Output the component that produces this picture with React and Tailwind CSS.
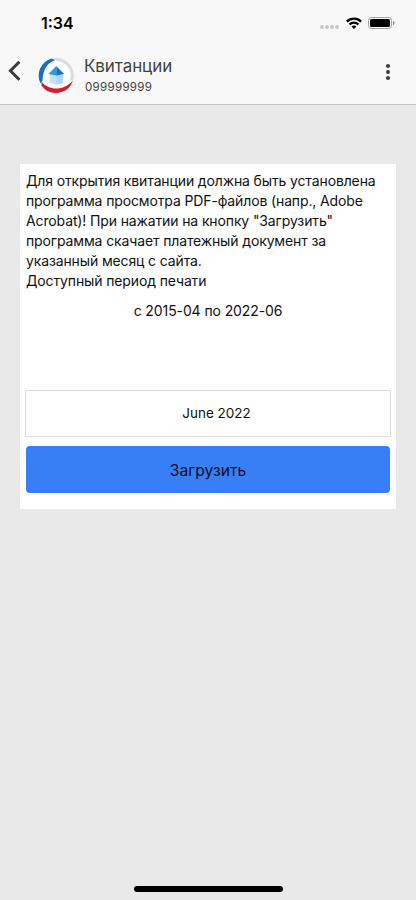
const description = [
  'Для открытия квитанции должна быть установлена',
  'программа просмотра PDF-файлов (напр., Adobe',
  'Acrobat)! При нажатии на кнопку "Загрузить"',
  'программа скачает платежный документ за',
  'указанный месяц с сайта.',
  'Доступный период печати',
];

const StatusBar = () => (
  <div className="flex h-[46px] items-center justify-between pl-[41px] pr-[21px]">
    <span className="text-[16px] font-semibold leading-5 text-black">1:34</span>
    <div className="flex items-center">
      <svg width="19" height="4" viewBox="0 0 19 4" className="mr-[7px] mt-2" fill="#c4c4c6">
        <circle cx="2" cy="2" r="1.9" />
        <circle cx="7" cy="2" r="1.9" />
        <circle cx="12" cy="2" r="1.9" />
        <circle cx="17" cy="2" r="1.9" />
      </svg>
      <svg width="16" height="12" viewBox="0 0 16 12" className="mr-[6px]" fill="none" stroke="#000" strokeWidth="2.3">
        <path d="M0.9 4.6a10.1 10.1 0 0 1 14.2 0" />
        <path d="M3.5 7.5a6.4 6.4 0 0 1 9 0" />
        <path d="M8 12L5.6 9.6a3.5 3.5 0 0 1 4.8 0z" fill="#000" stroke="none" />
      </svg>
      <svg width="27" height="12" viewBox="0 0 27 12">
        <rect x="0.5" y="0.5" width="23" height="11" rx="3" fill="none" stroke="#a2a2a4" />
        <rect x="2" y="2" width="20" height="8" rx="1.6" fill="#000" />
        <path d="M25 4v4c1-.4 1.5-1.1 1.5-2S26 4.4 25 4z" fill="#8e8e90" />
      </svg>
    </div>
  </div>
);

const Logo = () => (
  <svg width="36" height="37" viewBox="0 0 36 37">
    <circle cx="18" cy="18.5" r="15.5" fill="#fff" />
    <path d="M16 .8A17.7 17.7 0 0 1 35 23.5L32 23A14.5 14.5 0 0 0 18.5 4z" fill="#dcdcdd" />
    <path d="M2.5 26.5A17.9 17.9 0 0 1 13.5 1.4L17.5 3Q5 7 4.5 24z" fill="#1c70b5" />
    <path d="M3.5 24.8C11 34 26 34 35 23.5A17.8 17.8 0 0 1 3.5 28.5z" fill="#d21f2d" />
    <path d="M11.7 17.5l6.6-1 6.7 1V26l-6.7 1.5L11.7 26z" fill="#c3e0f6" />
    <path d="M18.3 18v9.5L25 26v-8.5z" fill="#add6f4" />
    <path d="M18.3 9L10.5 17l7.8 1.5z" fill="#2e9bdb" />
    <path d="M18.3 9l7.7 8-7.7 1.5z" fill="#1873b7" />
  </svg>
);

const Header = () => (
  <header className="h-[105px] border-b border-[#c4c4c4] bg-[#f8f8f8]">
    <StatusBar />
    <div className="flex items-start pl-[8px] pr-[25px] pt-[10px]">
      <svg width="14" height="22" viewBox="0 0 14 22" className="mt-[4px]" fill="none" stroke="#3b3b3b" strokeWidth="3">
        <path d="M11.4 1.8L2.4 10.8l9 9" />
      </svg>
      <div className="ml-[16px] mt-[1px]">
        <Logo />
      </div>
      <div className="ml-[10px] flex-1 text-[#424242]">
        <h1 className="text-[17px] leading-5 tracking-[-0.08px]">Квитанции</h1>
        <p className="mt-[3px] pl-px text-[11.5px] leading-4 tracking-[0.32px]">099999999</p>
      </div>
      <svg width="6" height="18" viewBox="0 0 6 18" className="mt-[7px]" fill="#424242">
        <circle cx="3" cy="3" r="2.1" />
        <circle cx="3" cy="9" r="2.1" />
        <circle cx="3" cy="15" r="2.1" />
      </svg>
    </div>
  </header>
);

export default function App() {
  return (
    <div className="flex h-[900px] w-[416px] flex-col overflow-hidden bg-[#e9e9e9] font-['Inter','Noto_Sans',sans-serif]">
      <Header />
      <main className="flex-1 px-5 pt-[59px]">
        <section className="flex h-[345px] flex-col bg-white px-[6px] pt-[7px] text-[14px] leading-5 tracking-[-0.13px] text-[#111]">
          {description.map((line) => (
            <p key={line} className="whitespace-nowrap">{line}</p>
          ))}
          <p className="mt-[10px] text-center tracking-[-0.1px]">с 2015-04 по 2022-06</p>
          <button className="-mx-px mt-[69px] h-[47px] border border-[#dedede] bg-white pb-px pl-[17px] text-center text-[13.5px] tracking-normal">
            June 2022
          </button>
          <button className="mt-[9px] h-[47px] rounded-[4px] bg-[#387ef5] pt-[2px] text-center text-[15.6px] tracking-normal text-[#06101f]">
            Загрузить
          </button>
        </section>
      </main>
      <div className="mx-auto mb-[8px] h-[6px] w-[149px] rounded-full bg-black" />
    </div>
  );
}
